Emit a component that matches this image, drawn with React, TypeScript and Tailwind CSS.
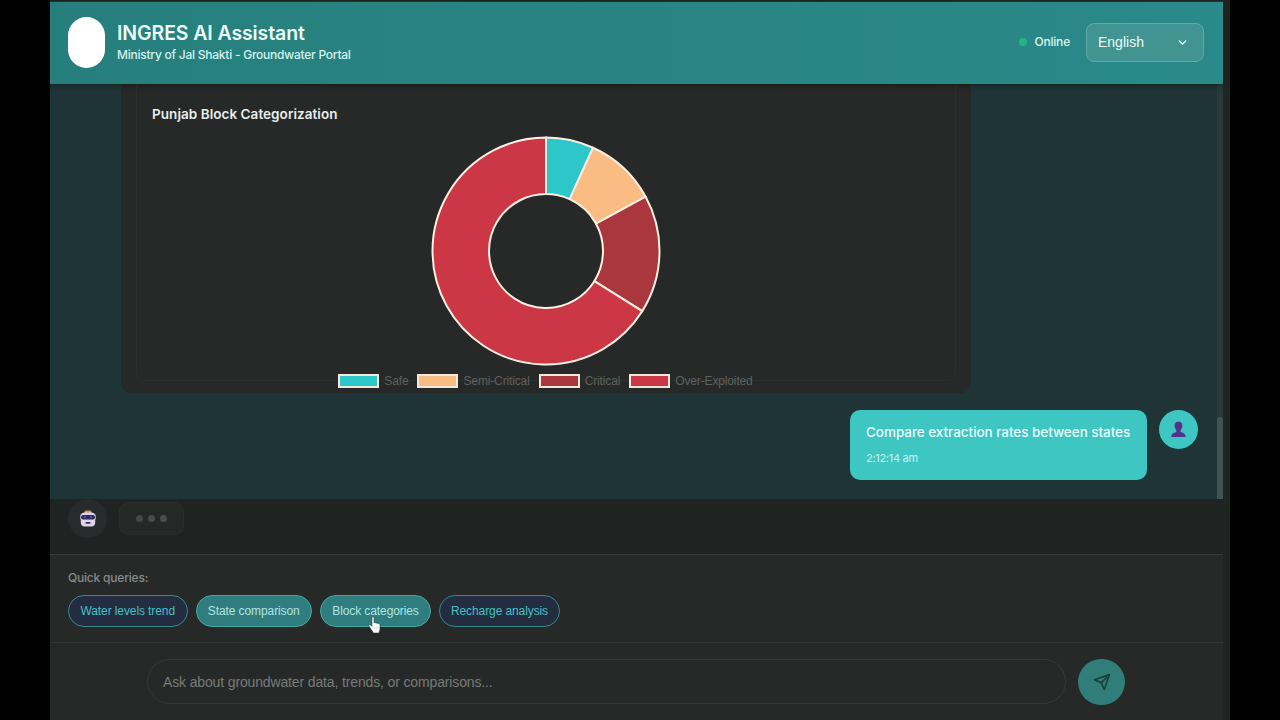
import { ChevronDown } from 'lucide-react';

interface Category {
  label: string;
  color: string;
  start: number;
  end: number;
}

// start / end are clockwise degrees from 12 o'clock
const CATEGORIES: Category[] = [
  { label: 'Safe', color: '#2dc6c9', start: 0, end: 24.5 },
  { label: 'Semi-Critical', color: '#f9bd84', start: 24.5, end: 61.4 },
  { label: 'Critical', color: '#a9373d', start: 61.4, end: 122 },
  { label: 'Over-Exploited', color: '#cc3745', start: 122, end: 360 },
];

const QUICK_QUERIES = [
  { label: 'Water levels trend', width: 'w-[119.5px]', active: false },
  { label: 'State comparison', width: 'w-[116.5px]', active: true },
  { label: 'Block categories', width: 'w-[111px]', active: true },
  { label: 'Recharge analysis', width: 'w-[121px]', active: false },
];

const point = (angle: number, radius: number) => {
  const rad = ((angle - 90) * Math.PI) / 180;
  return `${(115 + radius * Math.cos(rad)).toFixed(2)} ${(115 + radius * Math.sin(rad)).toFixed(2)}`;
};

const slicePath = ({ start, end }: Category) => {
  const large = end - start > 180 ? 1 : 0;
  return `M${point(start, 113.5)} A113.5 113.5 0 ${large} 1 ${point(end, 113.5)} L${point(end, 57)} A57 57 0 ${large} 0 ${point(start, 57)} Z`;
};

function Header() {
  return (
    <header className="relative z-10 flex h-[83px] shrink-0 items-center justify-between border-t border-[#1b3331] bg-linear-to-r from-[#267f7d] to-[#2a8a89] pr-[19px] pb-0.5 pl-[18px] shadow-[0_2px_6px_rgba(0,0,0,0.3)]">
      <div className="flex items-center gap-3">
        <div className="h-[51px] w-[37px] rounded-full bg-white" />
        <div>
          <h1 className="text-[19.5px] leading-6 font-semibold tracking-[-0.1px] whitespace-nowrap text-[#ecfbf8]">INGRES AI Assistant</h1>
          <p className="mt-px text-[12px] leading-[18px] font-medium tracking-[-0.24px] whitespace-nowrap text-[#d5f3ee]">Ministry of Jal Shakti - Groundwater Portal</p>
        </div>
      </div>
      <div className="flex items-center">
        <span className="size-2 rounded-full bg-[#25b582]" />
        <span className="ml-[7px] text-[12px] font-medium tracking-[-0.2px] text-[#dcf5f1]">Online</span>
        <button className="ml-4 flex h-[39px] w-[118px] items-center justify-between rounded-lg border border-[#5fa9a6] bg-[#429492] pr-3.5 pl-[11px] font-['Liberation_Sans',sans-serif] text-[14px] text-[#eefaf8]">
          English
          <ChevronDown className="size-[13px]" strokeWidth={2.6} />
        </button>
      </div>
    </header>
  );
}

function CategoryChart() {
  return (
    <div className="ml-[71px] h-[309px] w-[850px] shrink-0 rounded-b-[11px] bg-[#262928] px-[15px] pb-3">
      <div className="flex h-[297px] flex-col items-center rounded-b-lg border border-t-0 border-[#2c2f2e] px-[15px] pt-5">
        <h2 className="self-start text-[13.5px] leading-5 font-semibold tracking-[0.05px] text-[#e9eeec]">Punjab Block Categorization</h2>
        <svg className="mt-3 mr-px size-[230px] shrink-0" viewBox="0 0 230 230">
          {CATEGORIES.map((category) => (
            <path key={category.label} d={slicePath(category)} fill={category.color} stroke="#fbeee2" strokeWidth="2" strokeLinejoin="round" />
          ))}
        </svg>
        <div className="mt-1.5 mr-px flex gap-[9px] font-['Liberation_Sans',sans-serif] text-[12px] tracking-[-0.14px] text-[#5d6160]">
          {CATEGORIES.map((category) => (
            <div key={category.label} className="flex h-[18px] items-center gap-[5px] whitespace-nowrap">
              <span className="h-3.5 w-[41px] border-2 border-[#f4e8dc]" style={{ backgroundColor: category.color }} />
              {category.label}
            </div>
          ))}
        </div>
      </div>
    </div>
  );
}

function UserIcon() {
  return (
    <svg width="17" height="17" viewBox="0 0 17 17" fill="#53328d">
      <path d="M8.500 .8C5.400 .8 4.600 2.600 4.800 5c-.5.2-.2 1.600.3 1.800.2 1.200.7 2 1.300 2.500v1.500C5 12 1.600 12 1.200 16h14.600c-.4-4-3.800-4-5.200-5.200V9.300c.6-.5 1.100-1.300 1.300-2.500.5-.2.8-1.600.3-1.800C12.400 2.600 11.600.8 8.500.8Z" />
    </svg>
  );
}

function RobotIcon() {
  return (
    <svg width="18" height="18" viewBox="0 0 18 18">
      <rect x="5.500" y=".5" width="7" height="4" rx="1.500" fill="#d99058" />
      <rect x="1" y="4" width="16" height="6" rx="2" fill="#a58bc2" />
      <rect x="1.800" y="2.500" width="14.400" height="14" rx="4" fill="#ded5ed" />
      <rect x="2" y="5" width="14" height="4.500" rx="2.200" fill="#2c2a5e" />
      <circle cx="6" cy="7.200" r="1.100" fill="#4a6ba0" />
      <circle cx="12" cy="7.200" r="1.100" fill="#4a6ba0" />
      <rect x="6.500" y="12" width="5" height="1.700" rx=".8" fill="#3d2d5f" />
    </svg>
  );
}

function Messages() {
  return (
    <main className="relative flex h-[415px] shrink-0 flex-col bg-[#1e3436]">
      <CategoryChart />
      <div className="mt-[17px] flex justify-end gap-3 pr-[25px]">
        <div className="h-[70px] w-[297px] rounded-[10px] bg-[#3ec6c3] px-4 pt-3">
          <p className="text-[13.5px] leading-5 font-medium tracking-[-0.05px] whitespace-nowrap text-[#e9fcfa]">Compare extraction rates between states</p>
          <p className="mt-2 text-[11px] leading-4 tracking-[-0.3px] whitespace-nowrap text-[#c9f2ef]">2:12:14 am</p>
        </div>
        <div className="flex size-[39px] items-center justify-center rounded-full bg-[#3ec6c3]">
          <UserIcon />
        </div>
      </div>
      <div className="absolute top-0 right-0 bottom-0 flex w-1.5 items-end bg-[#263a3b]">
        <div className="h-[82px] w-full rounded-t-sm bg-[#3f5553]" />
      </div>
    </main>
  );
}

function TypingIndicator() {
  return (
    <div className="flex h-[55px] shrink-0 items-start gap-3 bg-[#1f2322] pl-[18px]">
      <div className="flex size-[39px] items-center justify-center rounded-full bg-[#282b2b]">
        <RobotIcon />
      </div>
      <div className="mt-[3px] flex h-[33px] w-[65px] items-center justify-center gap-[5px] rounded-[10px] border border-[#2b2e2d] bg-[#252827]">
        <span className="size-[7px] rounded-full bg-[#454847]" />
        <span className="size-[7px] rounded-full bg-[#484b4a]" />
        <span className="size-[7px] rounded-full bg-[#4b4e4d]" />
      </div>
    </div>
  );
}

function QuickQueries() {
  return (
    <section className="h-[88px] shrink-0 border-t border-[#383b3a] bg-[#262928] pt-3.5 pl-[18px]">
      <p className="text-[12px] leading-[18px] font-medium tracking-[-0.2px] text-[#868b89]">Quick queries:</p>
      <div className="mt-2 flex gap-2 font-['Liberation_Sans',sans-serif] text-[12px] tracking-[-0.1px]">
        {QUICK_QUERIES.map(({ label, width, active }) => (
          <button
            key={label}
            className={`${width} h-8 rounded-full border whitespace-nowrap ${
              active ? 'border-[#43a9a3] bg-[#307d80] text-[#aee5df]' : 'border-[#35898d] bg-[#242d40] text-[#45c0c3]'
            }`}
          >
            {label}
          </button>
        ))}
      </div>
    </section>
  );
}

function Composer() {
  return (
    <footer className="flex flex-1 items-start gap-3 border-t border-[#323635] bg-[#262928] pt-4 pl-[97px]">
      <input
        className="h-[45px] w-[919px] rounded-full border border-[#363938] bg-[#262928] px-[15px] font-['Liberation_Sans',sans-serif] text-[14px] tracking-[-0.14px] outline-none placeholder:text-[#777b79]"
        placeholder="Ask about groundwater data, trends, or comparisons..."
      />
      <button className="flex h-[46px] w-[47px] items-center justify-center rounded-full bg-[#317d79]">
        <svg width="18" height="18" viewBox="0 0 24 24" fill="none" stroke="#163c3b" strokeWidth="2" strokeLinejoin="round" strokeLinecap="round">
          <path d="M22 2 11 13" />
          <path d="m22 2-7 20-4-9-9-4Z" />
        </svg>
      </button>
    </footer>
  );
}

function HandCursor() {
  return (
    <svg className="absolute top-[616px] left-[368px] z-20" width="14" height="18" viewBox="0 0 14 18">
      <path
        d="M4 1.500C4 .5 6 .5 6 1.500V7c.3-.8 2-.6 2 .4.3-.7 2-.5 2 .5.5-.6 2-.3 2 .7v4.100c0 1.500-1 2.300-1 4.300H5.200c0-1.600-1.700-2.600-3.200-5.300C1.200 10.300.3 9.600 1 9c.9-.7 2.200.2 3 1.300Z"
        fill="#fff"
        stroke="#1d2929"
        strokeWidth=".5"
      />
      <path d="M6.200 10.500v2.500M8.200 10.500v2.500M10.200 10.500v2.500" stroke="#a0a7a6" strokeWidth=".4" />
    </svg>
  );
}

export default function App() {
  return (
    <div className="relative flex h-[720px] w-[1280px] overflow-hidden bg-black pl-[50px] font-['Inter',sans-serif]">
      <div className="flex w-[1180px] bg-[#1f2622] pr-[7px]">
        <div className="flex h-full w-[1173px] flex-col pt-px">
          <Header />
          <Messages />
          <TypingIndicator />
          <QuickQueries />
          <Composer />
        </div>
      </div>
      <HandCursor />
    </div>
  );
}
